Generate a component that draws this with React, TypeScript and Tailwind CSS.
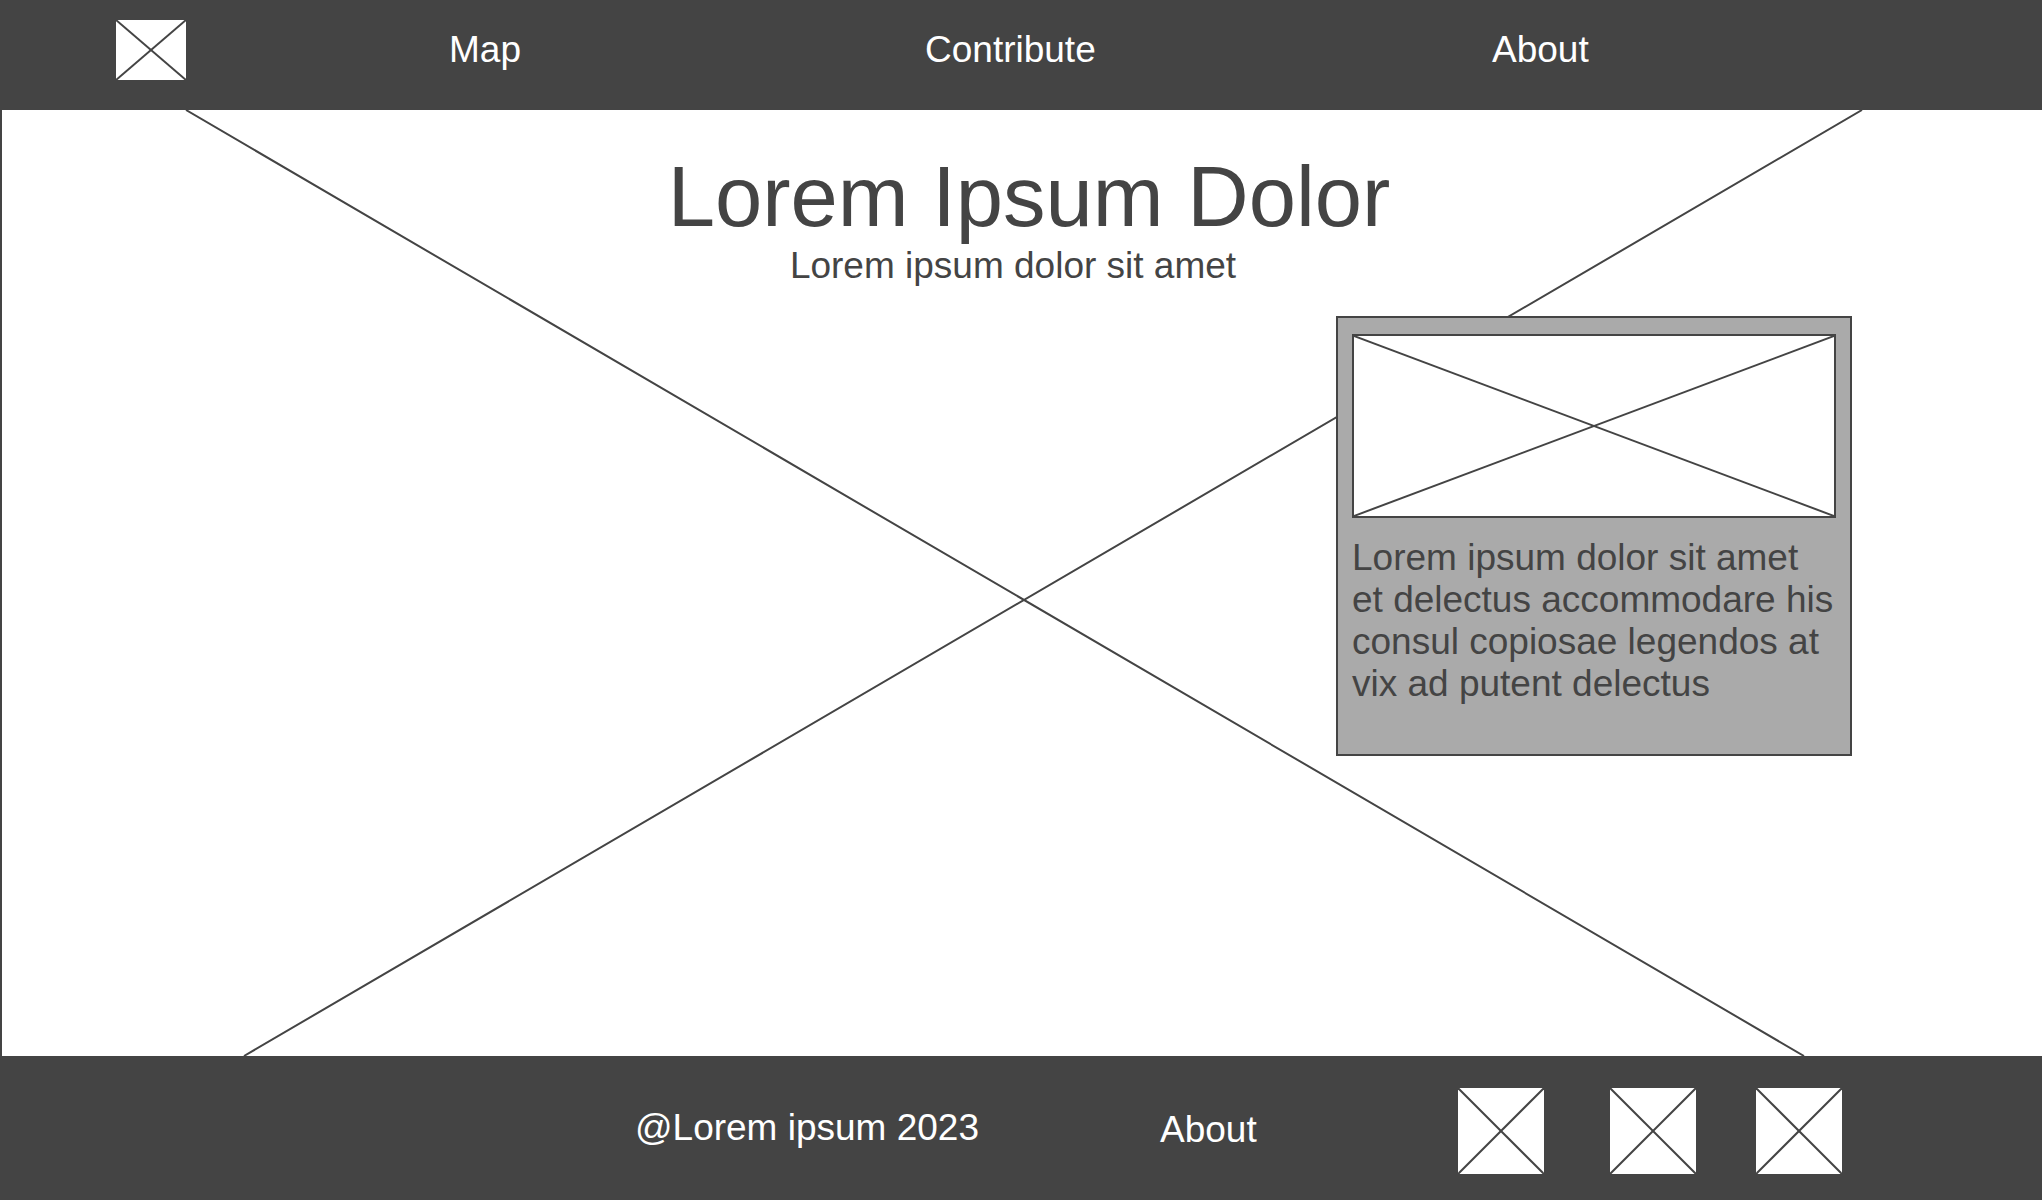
import React from "react";

function Cross({ className = "" }: { className?: string }) {
  return (
    <svg className={"block h-full w-full " + className} aria-hidden="true">
      <line x1="0" y1="0" x2="100%" y2="100%" stroke="#444444" strokeWidth="2" />
      <line x1="100%" y1="0" x2="0" y2="100%" stroke="#444444" strokeWidth="2" />
    </svg>
  );
}

function Header() {
  return (
    <header className="bg-[#444444] pt-5 pb-[30px] text-[37px] leading-[44px] text-white">
      <nav className="grid grid-cols-[449fr_476fr_567fr_550fr] items-center">
        <a href="#home" aria-label="Home" className="ml-[116px] block h-[60px] w-[70px] bg-white">
          <Cross />
        </a>
        <a href="#map" className="justify-self-start">Map</a>
        <a href="#contribute" className="justify-self-start">Contribute</a>
        <a href="#about" className="justify-self-start">About</a>
      </nav>
    </header>
  );
}

function Hero() {
  return (
    <main className="relative flex flex-1 flex-col border-l-2 border-[#444444] bg-white pt-10 pb-10 text-[#444444]">
      <svg
        className="absolute inset-y-0 right-0 -left-0.5 h-full w-[calc(100%+2px)]"
        viewBox="0 0 2042 946"
        preserveAspectRatio="none"
        aria-hidden="true"
      >
        <path
          d="M186 0 L1804 946 M1862 0 L244 946"
          stroke="#444444"
          strokeWidth="2"
          fill="none"
          vectorEffect="non-scaling-stroke"
        />
      </svg>
      <div className="relative text-center">
        <h1 className="pr-0 pl-3.5 text-[85px] leading-[94px]">Lorem Ipsum Dolor</h1>
        <p className="pr-[18px] text-[37px] leading-[44px]">Lorem ipsum dolor sit amet</p>
      </div>
      <article className="relative mt-7 mr-[190px] w-[516px] self-end border-2 border-[#444444] bg-[#aaaaaa] px-3.5 pt-4 pb-[49px]">
        <div className="h-[184px] border-2 border-[#444444] bg-white">
          <Cross />
        </div>
        <p className="mt-[19px] text-[37px] leading-[42px]">
          Lorem ipsum dolor sit amet et delectus accommodare his consul copiosae legendos at vix ad
          putent delectus
        </p>
      </article>
    </main>
  );
}

function Footer() {
  const socials = ["Social link one", "Social link two", "Social link three"];
  return (
    <footer className="grid grid-cols-[635fr_525fr_298fr_152fr_146fr_286fr] items-start bg-[#444444] pt-8 pb-[26px] text-[37px] leading-[44px] text-white">
      <p className="col-start-2 mt-[18px]">@Lorem ipsum 2023</p>
      <a href="#about" className="mt-5 justify-self-start">About</a>
      {socials.map((label) => (
        <a key={label} href="#social" aria-label={label} className="block size-[86px] bg-white">
          <Cross />
        </a>
      ))}
    </footer>
  );
}

export default function App() {
  return (
    <div className="flex min-h-screen flex-col font-['Liberation_Sans',Arial,sans-serif]">
      <Header />
      <Hero />
      <Footer />
    </div>
  );
}
